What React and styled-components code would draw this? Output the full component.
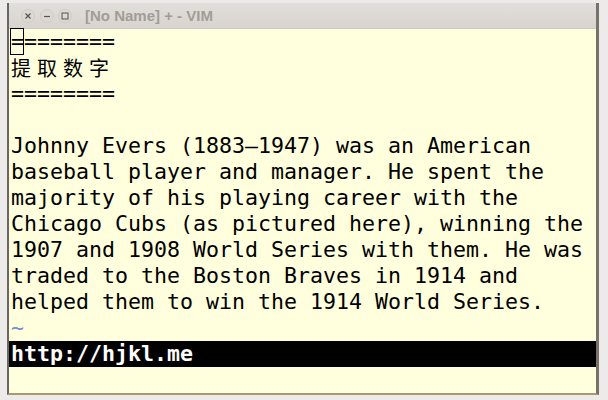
import React from 'react';
import styled, { createGlobalStyle } from 'styled-components';

const GlobalStyle = createGlobalStyle`
  html, body {
    margin: 0;
    padding: 0;
    background: #ecebea;
  }
`;

const Desktop = styled.div`
  width: 608px;
  height: 400px;
  padding: 3px 0 0 7px;
  box-sizing: border-box;
`;

const Window = styled.div`
  width: 592px;
  border-left: 2px solid #6a6560;
  border-right: 3px solid #7a7268;
  border-bottom: 2px solid #a89a70;
  box-sizing: border-box;
  display: flex;
  flex-direction: column;
`;

const TitleBar = styled.div`
  height: 25px;
  display: flex;
  align-items: center;
  padding-left: 12px;
  background: linear-gradient(#e2dfdb, #d7d3ce);
  border-bottom: 1px solid #cfcac3;
  font-family: "Liberation Sans", sans-serif;
`;

const WinButton = styled.div`
  width: 14px;
  height: 14px;
  border-radius: 50%;
  background: #dcd8d3;
  border: 1px solid #d0ccc6;
  margin-right: ${({ gap }) => gap}px;
  display: flex;
  align-items: center;
  justify-content: center;
  box-sizing: border-box;
`;

const Title = styled.div`
  font-size: 15px;
  font-weight: bold;
  color: #a19d97;
  margin-left: 13px;
`;

const Editor = styled.div`
  position: relative;
  background: #ffffdd;
  padding-left: 2px;
  font-family: "DejaVu Sans Mono", "Noto Sans CJK SC", monospace;
  font-size: 21.6px;
  color: #000;
`;

const Row = styled.div`
  height: 26px;
  line-height: 26px;
  white-space: pre;
  color: ${({ tilde }) => (tilde ? '#6f8fd0' : 'inherit')};
`;

const Wide = styled.span`
  font-family: "Noto Sans CJK SC", sans-serif;
  font-size: 20px;
  letter-spacing: 6px;
`;

const StatusLine = styled.div`
  height: 26px;
  line-height: 26px;
  background: #000;
  color: #fff;
  font-weight: bold;
  margin-left: -2px;
  padding-left: 2px;
`;

const Cursor = styled.div`
  position: absolute;
  left: 1px;
  top: -1px;
  width: 14px;
  height: 27px;
  border: 1px solid #000;
  box-sizing: border-box;
`;

const paragraph = [
  'Johnny Evers (1883\u20131947) was an American',
  'baseball player and manager. He spent the',
  'majority of his playing career with the',
  'Chicago Cubs (as pictured here), winning the',
  '1907 and 1908 World Series with them. He was',
  'traded to the Boston Braves in 1914 and',
  'helped them to win the 1914 World Series.',
];

export default function App() {
  return (
    <>
      <GlobalStyle />
      <Desktop>
        <Window>
          <TitleBar>
            <WinButton gap={5}>
              <svg width="8" height="8" viewBox="0 0 8 8">
                <path d="M1.5 1.5 L6.5 6.5 M6.5 1.5 L1.5 6.5" stroke="#555" strokeWidth="1.2" />
              </svg>
            </WinButton>
            <WinButton gap={4}>
              <svg width="8" height="8" viewBox="0 0 8 8">
                <path d="M1 4.5 H7" stroke="#555" strokeWidth="1.2" />
              </svg>
            </WinButton>
            <WinButton gap={0}>
              <svg width="8" height="8" viewBox="0 0 8 8">
                <rect x="1" y="1" width="6" height="6" fill="none" stroke="#555" strokeWidth="1" />
              </svg>
            </WinButton>
            <Title>[No Name] + - VIM</Title>
          </TitleBar>
          <Editor>
            <Row>========</Row>
            <Row><Wide>提取数字</Wide></Row>
            <Row>========</Row>
            <Row> </Row>
            {paragraph.map((line) => (
              <Row key={line}>{line}</Row>
            ))}
            <Row tilde>~</Row>
            <StatusLine>http://hjkl.me</StatusLine>
            <Row> </Row>
            <Cursor />
          </Editor>
        </Window>
      </Desktop>
    </>
  );
}
